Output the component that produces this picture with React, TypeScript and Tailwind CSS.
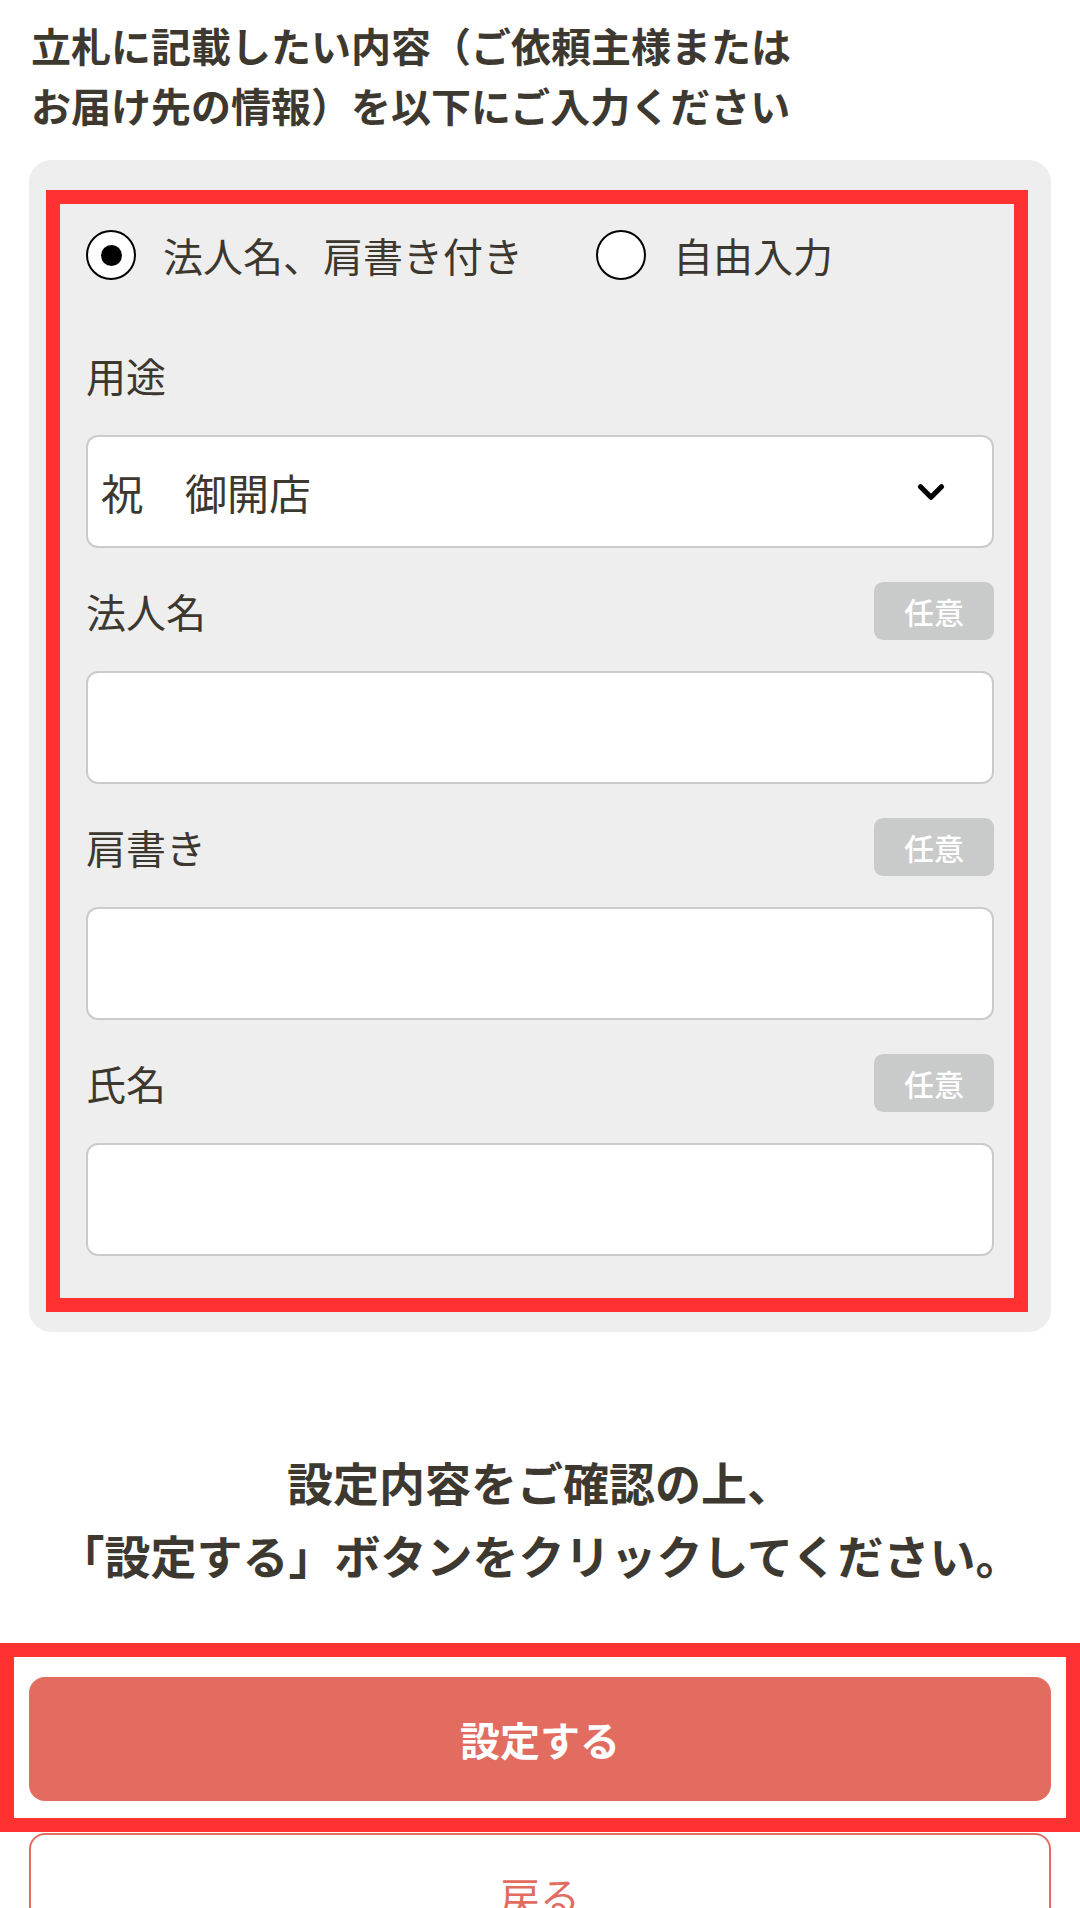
import { ChevronDown } from "lucide-react";

const FONT = "font-['Noto_Sans_CJK_JP','Noto_Sans',sans-serif]";

function Badge() {
  return (
    <span className="flex h-[58px] w-[120px] items-center justify-center rounded-[9px] bg-[#c9caca] text-[30px] font-medium leading-none text-white">
      任意
    </span>
  );
}

function FieldLabel({ label, optional }: { label: string; optional?: boolean }) {
  return (
    <div className="flex h-[58px] items-center justify-between">
      <span className="text-[40px] leading-none text-[#3c3830]">{label}</span>
      {optional && <Badge />}
    </div>
  );
}

function TextBox() {
  return (
    <div className="mt-[31px] h-[113px] rounded-[12px] border-2 border-[#cbcbcb] bg-white" />
  );
}

function Radio({ label, checked }: { label: string; checked?: boolean }) {
  return (
    <label className="flex items-center gap-[27px]">
      <span className="flex h-[50px] w-[50px] items-center justify-center rounded-full border-[2.5px] border-black bg-white">
        {checked && <span className="h-[21px] w-[21px] rounded-full bg-black" />}
      </span>
      <span className="text-[40px] leading-none text-[#3c3830]">{label}</span>
    </label>
  );
}

export default function App() {
  return (
    <div className={`${FONT} h-[1908px] w-[1080px] overflow-hidden bg-white px-[29px]`}>
      {/* 見出し */}
      <h1 className="whitespace-nowrap pl-[2px] pt-[15px] text-[40px] font-bold leading-[60px] text-[#3e3930]">
        立札に記載したい内容（ご依頼主様または
        <br />
        お届け先の情報）を以下にご入力ください
      </h1>

      {/* 入力パネル */}
      <section className="relative mt-[25px] rounded-[22px] bg-[#eeeeee] px-[57px] pb-[76px] pt-[70px]">
        <div className="flex h-[50px] items-center gap-[73px]">
          <Radio label="法人名、肩書き付き" checked />
          <Radio label="自由入力" />
        </div>

        <div className="mt-[66px]">
          <FieldLabel label="用途" />
        </div>
        <div className="mt-[31px] flex h-[113px] items-center justify-between rounded-[12px] border-2 border-[#cbcbcb] bg-white pl-[13px] pr-[40px]">
          <span className="text-[42px] leading-none text-[#3c3830]">祝　御開店</span>
          <ChevronDown className="h-[42px] w-[42px] text-black" strokeWidth={3} />
        </div>

        <div className="mt-[34px]">
          <FieldLabel label="法人名" optional />
        </div>
        <TextBox />

        <div className="mt-[34px]">
          <FieldLabel label="肩書き" optional />
        </div>
        <TextBox />

        <div className="mt-[34px]">
          <FieldLabel label="氏名" optional />
        </div>
        <TextBox />

        {/* 注釈枠 */}
        <div className="pointer-events-none absolute bottom-[20px] left-[17px] right-[23px] top-[30px] border-[14px] border-[#ff3131]" />
      </section>

      {/* 確認文 */}
      <p className="mt-[113px] whitespace-nowrap text-center text-[46px] font-bold leading-[73px] text-[#3e3930]">
        設定内容をご確認の上、
        <br />
        「設定する」ボタンをクリックしてください。
      </p>

      <div className="relative mt-[86px]">
        <button
          type="button"
          className="flex h-[124px] w-full items-center justify-center rounded-[16px] bg-[#e26c60] text-[40px] font-bold text-white"
        >
          設定する
        </button>
        <div className="pointer-events-none absolute -bottom-[31px] -left-[29px] -right-[29px] -top-[34px] border-[14px] border-[#ff3131]" />
      </div>

      <button
        type="button"
        className="mt-[32px] flex h-[124px] w-full items-center justify-center rounded-[16px] border-2 border-[#e26c60] bg-white text-[40px] text-[#e26c60]"
      >
        戻る
      </button>
    </div>
  );
}
